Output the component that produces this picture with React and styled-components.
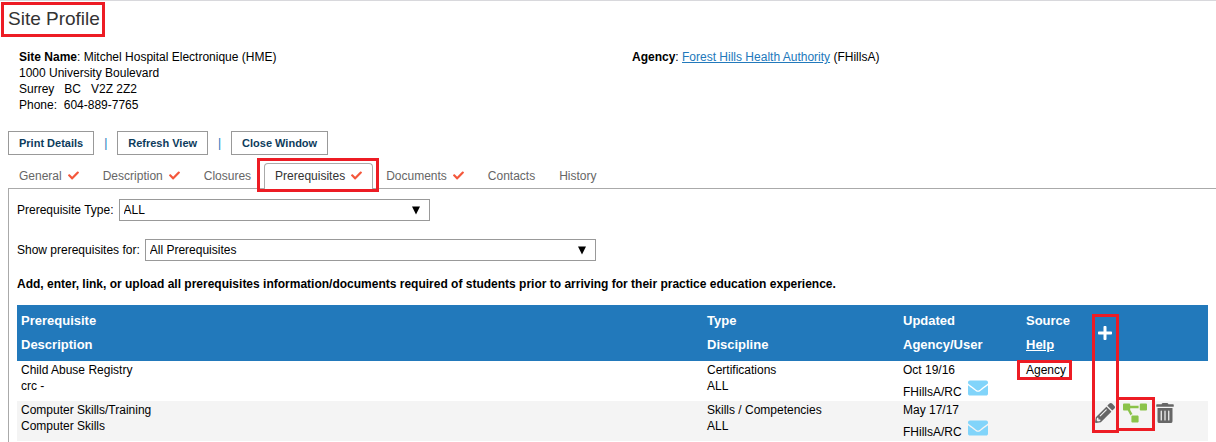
import React from "react";
import styled, { createGlobalStyle } from "styled-components";
import {
  FaCheck,
  FaEnvelope,
  FaPencilAlt,
  FaPlus,
  FaProjectDiagram,
  FaTrashAlt,
} from "react-icons/fa";

const tabs = [
  { name: "General", done: true },
  { name: "Description", done: true },
  { name: "Closures" },
  { name: "Prerequisites", done: true, active: true },
  { name: "Documents", done: true },
  { name: "Contacts" },
  { name: "History" },
];

const rows = [
  {
    name: "Child Abuse Registry",
    description: "crc -",
    type: "Certifications",
    discipline: "ALL",
    updated: "Oct 19/16",
    user: "FHillsA/RC",
    source: "Agency",
  },
  {
    name: "Computer Skills/Training",
    description: "Computer Skills",
    type: "Skills / Competencies",
    discipline: "ALL",
    updated: "May 17/17",
    user: "FHillsA/RC",
    editable: true,
  },
];

function SelectField({ id, label, option, width }) {
  return (
    <Field>
      <label htmlFor={id}>{label}</label>
      <SelectBox $width={width}>
        <select id={id} defaultValue={option}>
          <option>{option}</option>
        </select>
        <svg width="10" height="9" viewBox="0 0 10 9" aria-hidden="true">
          <path d="M1 0.5H9L5 8.5Z" />
        </svg>
      </SelectBox>
    </Field>
  );
}

function App() {
  return (
    <Page>
      <GlobalStyle />
      <Title>
        <Marker $top={-5} $right={-5} $bottom={-6} $left={-7} />
        Site Profile
      </Title>

      <Info>
        <address>
          <b>Site Name</b>: Mitchel Hospital Electronique (HME)
          <br />
          1000 University Boulevard
          <br />
          Surrey&nbsp;&nbsp; BC&nbsp;&nbsp; V2Z 2Z2
          <br />
          Phone:&nbsp; 604-889-7765
        </address>
        <div>
          <b>Agency</b>: <TextLink href="#agency">Forest Hills Health Authority</TextLink>{" "}
          (FHillsA)
        </div>
      </Info>

      <Toolbar>
        <Button type="button">Print Details</Button>
        <Divider>|</Divider>
        <Button type="button">Refresh View</Button>
        <Divider>|</Divider>
        <Button type="button">Close Window</Button>
      </Toolbar>

      <Tabs role="tablist">
        {tabs.map((tab) => (
          <Tab
            key={tab.name}
            type="button"
            role="tab"
            aria-selected={!!tab.active}
            $active={tab.active}
          >
            {tab.name}
            {tab.done && <FaCheck />}
            {tab.active && <Marker $top={-6} $right={-7} $bottom={-3} $left={-8} />}
          </Tab>
        ))}
      </Tabs>

      <Panel role="tabpanel">
        <SelectField id="type" label="Prerequisite Type:" option="ALL" width={311} />
        <SelectField
          id="show"
          label="Show prerequisites for:"
          option="All Prerequisites"
          width={451}
        />
        <Notice>
          Add, enter, link, or upload all prerequisites information/documents required of
          students prior to arriving for their practice education experience.
        </Notice>

        <Table>
          <colgroup>
            <col />
            <Col $width={196} />
            <Col $width={123} />
            <Col $width={66} />
            <Col $width={120} />
          </colgroup>
          <thead>
            <tr>
              <th>
                Prerequisite
                <br />
                Description
              </th>
              <th>
                Type
                <br />
                Discipline
              </th>
              <th>
                Updated
                <br />
                Agency/User
              </th>
              <th>
                Source
                <br />
                <a href="#help">Help</a>
              </th>
              <th>
                <Actions>
                  <IconButton type="button" aria-label="Add" $color="#fff">
                    <FaPlus size={16} />
                  </IconButton>
                </Actions>
                <ColumnMarker />
              </th>
            </tr>
          </thead>
          <tbody>
            {rows.map((row) => (
              <tr key={row.name}>
                <td>
                  {row.name}
                  <br />
                  {row.description}
                </td>
                <td>
                  {row.type}
                  <br />
                  {row.discipline}
                </td>
                <td>
                  {row.updated}
                  <User>
                    {row.user}
                    <IconButton type="button" aria-label="Send mail" $color="#81d4fa">
                      <FaEnvelope size={20} />
                    </IconButton>
                  </User>
                </td>
                <td>
                  {row.source && (
                    <Source>
                      {row.source}
                      <Marker $top={-2} $right={-6} $bottom={-2} $left={-9} />
                    </Source>
                  )}
                </td>
                <td>
                  {row.editable && (
                    <Actions>
                      <IconButton type="button" aria-label="Edit" $color="#666">
                        <FaPencilAlt size={20} />
                      </IconButton>
                      <IconButton type="button" aria-label="Link" $color="#8bc34a">
                        <FaProjectDiagram size={24} />
                        <Marker $top={-4} $right={-8} $bottom={-6} $left={-7} />
                      </IconButton>
                      <IconButton type="button" aria-label="Delete" $color="#666">
                        <FaTrashAlt size={20} />
                      </IconButton>
                    </Actions>
                  )}
                </td>
              </tr>
            ))}
          </tbody>
        </Table>
      </Panel>
    </Page>
  );
}

const GlobalStyle = createGlobalStyle`
  * {
    box-sizing: border-box;
  }

  body {
    margin: 0;
    background: #fff;
    color: #000;
    font: 12px/16px "Liberation Sans", Arial, sans-serif;
  }

  button,
  select {
    font: inherit;
    color: inherit;
  }
`;

const Page = styled.main`
  padding-left: 8px;
  border-top: 1px solid #d8d8dc;
`;

/* red frame laid over the part it points out */
const Marker = styled.span`
  position: absolute;
  top: ${(props) => props.$top}px;
  right: ${(props) => props.$right}px;
  bottom: ${(props) => props.$bottom}px;
  left: ${(props) => props.$left}px;
  border: 3px solid #ed1c24;
  pointer-events: none;
  z-index: 1;
`;

const ColumnMarker = styled(Marker)`
  top: 9px;
  left: 4px;
  right: auto;
  bottom: auto;
  width: 27px;
  height: 119px;
`;

const Title = styled.h1`
  position: relative;
  width: fit-content;
  margin: 6px 0 0;
  font-size: 19px;
  line-height: 24px;
  font-weight: 400;
  color: #333;
`;

const Info = styled.section`
  display: grid;
  grid-template-columns: 613fr 584fr;
  padding: 18px 0 18px 11px;

  address {
    font-style: normal;
  }
`;

const TextLink = styled.a`
  color: #2279bb;
`;

const Toolbar = styled.div`
  display: flex;
  align-items: center;
`;

const Button = styled.button`
  height: 24px;
  padding: 0 10px;
  border: 1px solid #999;
  background: #fff;
  color: #0d3c5c;
  font-size: 11px;
  font-weight: 700;
  cursor: pointer;
`;

const Divider = styled.span`
  width: 23px;
  text-align: center;
  color: #2279bb;
`;

const Tabs = styled.div`
  display: flex;
  gap: 2px;
  margin-top: 8px;
  border-bottom: 1px solid #aaa;
`;

const Tab = styled.button`
  position: relative;
  display: flex;
  align-items: center;
  gap: 6px;
  height: 26px;
  margin-bottom: -1px;
  padding: 0 10px 2px;
  border: 1px solid ${(props) => (props.$active ? "#aaa" : "transparent")};
  border-bottom: 0;
  border-radius: 4px 4px 0 0;
  background: ${(props) => (props.$active ? "#fff" : "transparent")};
  color: ${(props) => (props.$active ? "#333" : "#666")};
  cursor: pointer;

  svg {
    width: 11px;
    height: 11px;
    color: #f4573b;
  }
`;

const Panel = styled.section`
  padding: 10px 8px 1px;
  border-left: 1px solid #aaa;
`;

const Field = styled.div`
  display: flex;
  align-items: center;
  gap: 5px;
  margin-bottom: 18px;
`;

const SelectBox = styled.div`
  position: relative;
  width: ${(props) => props.$width}px;

  select {
    display: block;
    width: 100%;
    height: 22px;
    padding: 0 4px;
    border: 1px solid #999;
    border-radius: 0;
    background: #fff;
    appearance: none;
  }

  svg {
    position: absolute;
    top: 7px;
    right: 9px;
    pointer-events: none;
  }
`;

const Notice = styled.p`
  margin: -3px 0 13px;
  font-size: 12px;
  font-weight: 700;
`;

const Col = styled.col`
  width: ${(props) => props.$width}px;
`;

const Table = styled.table`
  width: 100%;
  table-layout: fixed;
  border-collapse: collapse;

  th {
    position: relative;
    height: 56px;
    padding: 4px;
    background: #2279bb;
    color: #fff;
    font-size: 13px;
    line-height: 24px;
    text-align: left;
  }

  th a {
    color: #fff;
  }

  td {
    height: 40px;
    padding: 1px 4px 0;
    vertical-align: top;
  }

  th:last-child,
  td:last-child {
    padding: 0 7px;
  }

  tbody tr:nth-child(even) {
    background: #f4f4f4;
  }
`;

const User = styled.div`
  display: flex;
  align-items: flex-end;
  gap: 6px;
  height: 22px;

  button {
    padding-bottom: 2px;
  }
`;

const Source = styled.span`
  position: relative;
  display: inline-block;
`;

const Actions = styled.div`
  display: flex;
  align-items: center;
  gap: 8px;
`;

const IconButton = styled.button`
  position: relative;
  display: flex;
  justify-content: center;
  min-width: 20px;
  padding: 0;
  border: 0;
  background: none;
  color: ${(props) => props.$color};
  cursor: pointer;
`;

export default App;
